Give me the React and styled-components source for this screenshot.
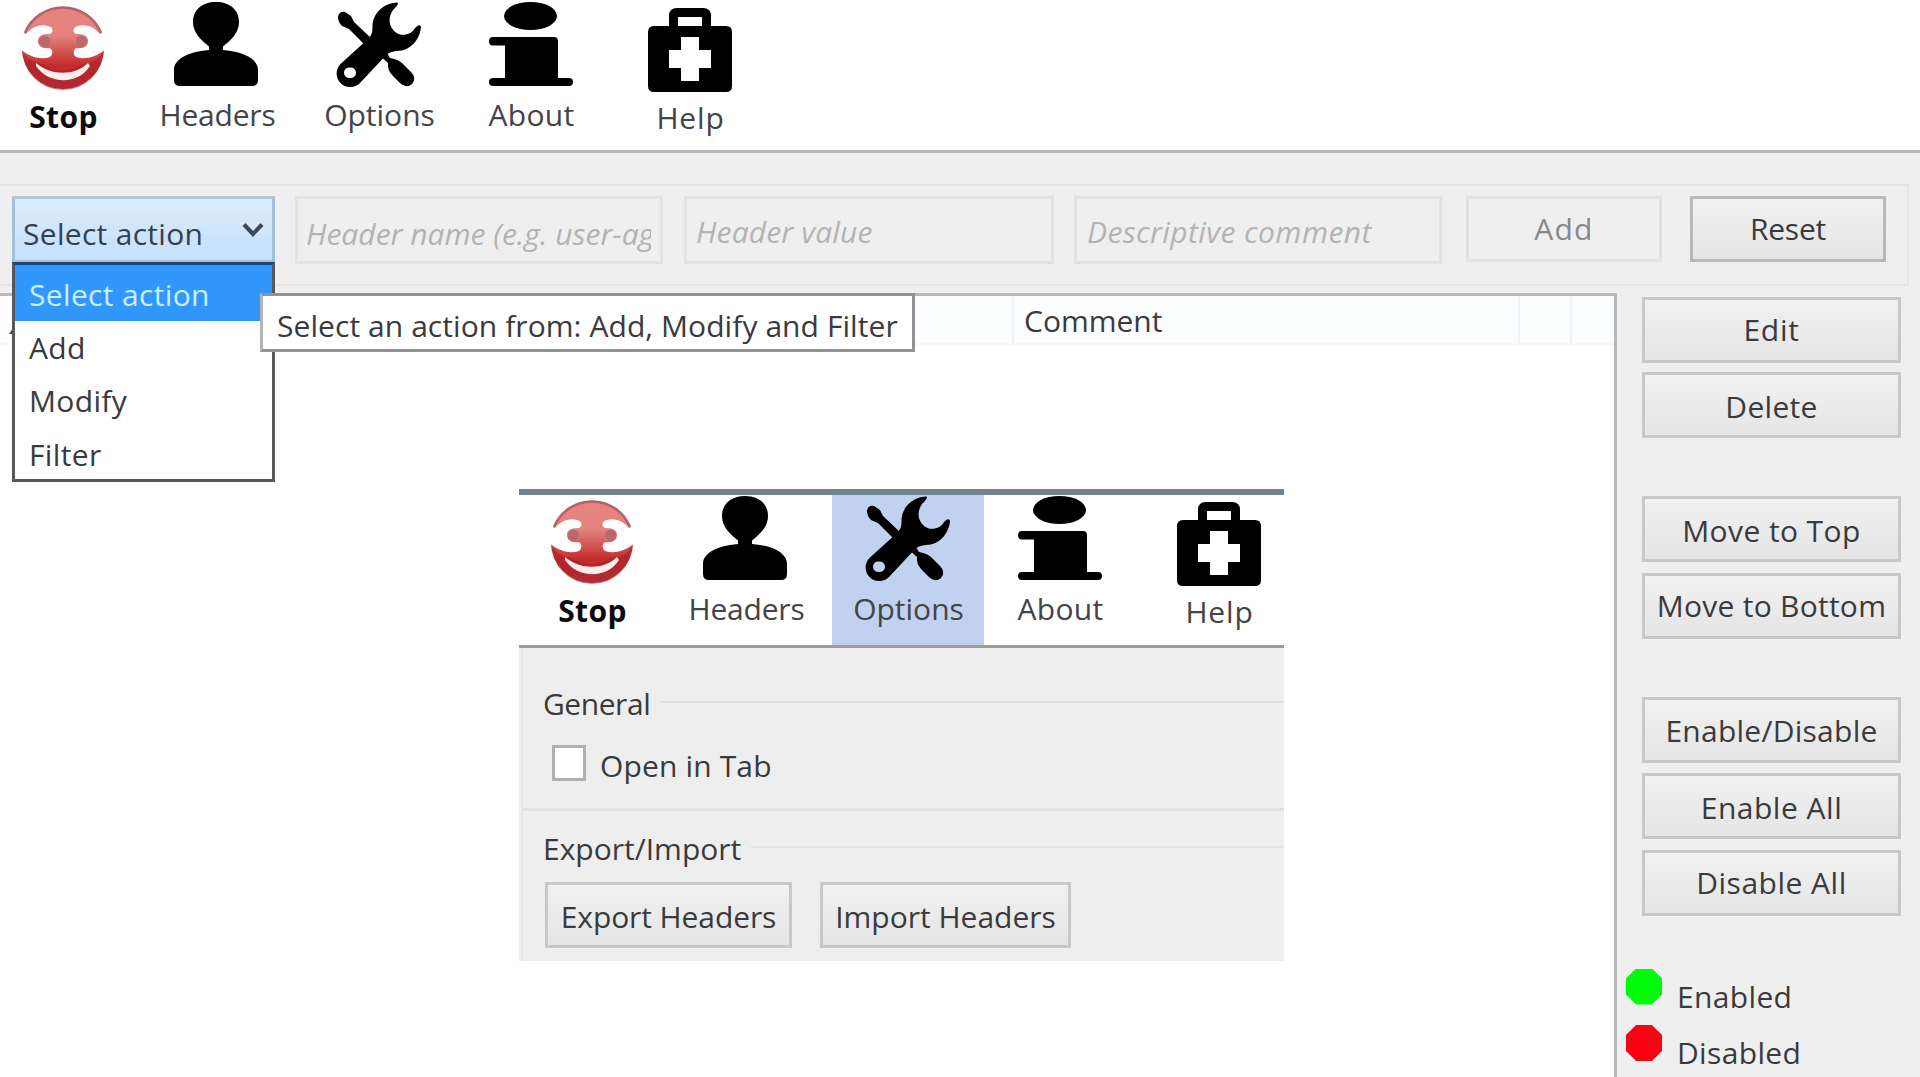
import React from 'react';
import styled, { createGlobalStyle } from 'styled-components';

const GlobalStyle = createGlobalStyle`
    * {
        box-sizing: border-box;
    }

    body {
        margin: 0;
        overflow: hidden;
        background: #efefef;
        color: #3a3a3c;
        font-family: "Open Sans", "Noto Sans", sans-serif;
        font-size: 30px;
        line-height: 40px;
        white-space: nowrap;
    }
`;

const Page = styled.div`
    display: flex;
    flex-direction: column;
    width: 1920px;
    height: 1077px;
    overflow: hidden;
`;

/* Toolbar, used by the main window and by the options panel */

const Bar = styled.div`
    display: flex;
    flex: none;
    height: ${props => props.$height}px;
    padding-left: ${props => props.$indent || 0}px;
    background: #fefefe;
    border-bottom: 3px solid ${props => props.$line};
`;

const Tool = styled.div`
    display: flex;
    flex: none;
    flex-direction: column;
    align-items: center;
    width: ${props => props.$width}px;
    margin-right: ${props => props.$after || 0}px;
    padding-top: ${props => props.$top}px;
    background: ${props => props.$active ? '#c0d2f0' : 'transparent'};

    svg {
        flex: none;
        width: 84px;
        height: 84px;
        margin-right: ${props => props.$nudge || 0}px;
        overflow: visible;
    }
`;

const ToolLabel = styled.span`
    margin-top: ${props => props.$gap}px;
    padding-left: 1px;
    color: ${props => props.$strong ? '#0a0a0c' : '#444446'};
    font-weight: ${props => props.$strong ? 700 : 400};
    letter-spacing: ${props => props.$track || 0}px;
`;

/* Filter row */

const FilterBar = styled.div`
    display: flex;
    flex: none;
    width: 1909px;
    height: 102px;
    margin-top: 31px;
    padding: 10px 0 0 12px;
    border: 2px solid #e5e5e5;
    border-left: none;
`;

const SelectWrap = styled.div`
    position: relative;
    z-index: 2;
    width: 263px;
    height: 67px;
`;

const SelectBox = styled.div`
    display: flex;
    align-items: center;
    justify-content: space-between;
    height: 67px;
    padding: 8px 8px 0 8px;
    border: 3px solid #a3bfd9;
    border-top-color: #b3c8db;
    background: linear-gradient(#dcecfc, #c3e0fb);
    color: #35404f;
    letter-spacing: 0.3px;

    svg {
        width: 22px;
        height: 16px;
        margin-top: -8px;
    }
`;

const Options = styled.div`
    position: absolute;
    top: 66px;
    left: 0;
    width: 263px;
    height: 220px;
    border: 3px solid #58585a;
    border-top-color: #1c4474;
    background: #fefefe;
`;

const Option = styled.div`
    display: flex;
    align-items: center;
    height: ${props => props.$selected ? 55.5 : 53.5}px;
    padding: ${props => props.$selected ? '4px' : '1px'} 0 0 14px;
    background: ${props => props.$selected ? '#3297fd' : 'transparent'};
    color: ${props => props.$selected ? '#c8f0ff' : 'inherit'};
    letter-spacing: 0.35px;
`;

const Tooltip = styled.div`
    position: absolute;
    top: 97px;
    left: 248px;
    display: flex;
    align-items: center;
    width: 655px;
    height: 59px;
    padding: 7px 0 0 14px;
    border: 3px solid #929294;
    border-left-color: #b4b4b6;
    background: #fefefe;
    letter-spacing: 0.07px;
`;

const Field = styled.div`
    display: flex;
    align-items: center;
    width: ${props => props.$width}px;
    height: 68px;
    margin-left: ${props => props.$before}px;
    padding: ${props => props.$drop}px 9px 0 ${props => props.$indent || 9}px;
    border: 3px solid #e2e2e2;
    color: #b3b3b3;
    font-style: italic;
    letter-spacing: ${props => props.$track || 0}px;

    span {
        overflow: hidden;
    }
`;

const Button = styled.button`
    display: flex;
    flex: none;
    align-items: center;
    justify-content: center;
    width: ${props => props.$width}px;
    height: 66px;
    margin: ${props => props.$above || 0}px 0 0 ${props => props.$before || 0}px;
    padding: ${props => props.$drop || 0}px 0 0 0;
    border: 3px solid ${props => props.disabled ? '#e1e1e1' : props.$dark ? '#b9b9b9' : '#c8c8c8'};
    background: ${props => props.disabled ? '#efefef' : 'linear-gradient(#f1f1f1, #e5e5e5)'};
    color: ${props => props.disabled ? '#88888a' : '#3a3a3e'};
    font: inherit;
    letter-spacing: ${props => props.$track || 0}px;
`;

/* Header list and side column */

const Content = styled.div`
    display: flex;
    flex: 1;
    min-height: 0;
`;

const HeaderList = styled.div`
    position: relative;
    width: 1617px;
    margin-top: 7px;
    border: solid #b7b8ba;
    border-width: 3px 3px 0 0;
    background: #fefefe;

    &::before {
        content: "";
        position: absolute;
        top: 29px;
        left: 9px;
        width: 6px;
        height: 9px;
        background: #7c3038;
        clip-path: polygon(100% 0, 100% 100%, 0 100%);
    }
`;

const Columns = styled.div`
    display: grid;
    grid-template-columns: 1012px 506px 52px 1fr;
    height: 49px;
    border-bottom: 2px solid #f5f7f8;
    background: #fcfdfe;
`;

const Column = styled.div`
    display: flex;
    align-items: center;
    padding: 2px 0 0 10px;
    border-left: 2px solid ${props => props.$first ? 'transparent' : '#f0f2f5'};
`;

const Side = styled.div`
    flex: 1;
    padding: 11px 0 0 25px;
`;

const Legend = styled.div`
    display: flex;
    gap: 15px;
    height: 56.5px;
    margin-left: -16px;
    letter-spacing: 0.35px;

    &:first-of-type {
        margin-top: 53px;
    }

    &::before {
        content: "";
        width: 36px;
        height: 36px;
        background: ${props => props.$color};
        clip-path: polygon(28% 0, 72% 0, 100% 28%, 100% 72%, 72% 100%, 28% 100%, 0 72%, 0 28%);
    }

    span {
        margin-top: 8px;
    }
`;

/* Options panel */

const Panel = styled.div`
    width: 765px;
    height: 472px;
    margin: 144px 0 0 519px;
    border-top: 6px solid #72858f;
    background: #eeeeee;
`;

const PanelBody = styled.div`
    height: 313px;
    margin-left: 2px;
    padding-top: 36px;
    border-left: 2px solid #e6e6e6;
`;

const GroupTitle = styled.div`
    display: flex;
    align-items: center;
    gap: 10px;
    height: 40px;
    padding-left: 20px;
    letter-spacing: ${props => props.$track || 0}px;

    &::after {
        content: "";
        flex: 1;
        height: 2px;
        margin-top: -5px;
        background: #e2e2e2;
    }
`;

const CheckRow = styled.label`
    display: flex;
    gap: 14px;
    height: 87px;
    margin-bottom: 18px;
    padding: 21px 0 0 29px;
    border-bottom: 3px solid #e2e2e2;

    span {
        margin-top: 1px;
        letter-spacing: 0.15px;
    }
`;

const Check = styled.i`
    width: 34px;
    height: 36px;
    border: 3px solid #b0b0b0;
    background: #ffffff;
`;

const ButtonRow = styled.div`
    display: flex;
    margin-top: 13px;
    padding-left: 22px;
`;

const StopIcon = () => (
    <svg viewBox="0 0 84 84">
        <defs>
            <linearGradient id="stopFill" x1="0" y1="0" x2="0" y2="1">
                <stop offset="0" stopColor="#e5837f" />
                <stop offset="0.35" stopColor="#e2827e" />
                <stop offset="0.6" stopColor="#cf4644" />
                <stop offset="0.72" stopColor="#c42a2c" />
                <stop offset="1" stopColor="#bd3a41" />
            </linearGradient>
        </defs>
        <circle cx="42" cy="42" r="41" fill="url(#stopFill)" />
        <path d="M4 27 A41 41 0 0 1 80 27" fill="none" stroke="#b4626c" strokeWidth="2.5" />
        <path d="M1 43 C5 53 13 57 22 58 C35 66 49 66 62 58 C71 57 79 53 83 43 A41 41 0 0 1 1 43Z" fill="#a81f2a" opacity="0.55" />
        <path d="M-2 28 L5 28 C12 19 24 17 31 22 Q33 28 27 28 C20 28 17 31 17 35 C17 40 21 43 29 42 Q34 46 29 51 C18 55 6 49 -2 42Z" fill="#fefefe" />
        <path d="M86 28 L79 28 C72 19 60 17 53 22 Q51 28 57 28 C64 28 67 31 67 35 C67 40 63 43 55 42 Q50 46 55 51 C66 55 78 49 86 42Z" fill="#fefefe" />
        <circle cx="23.5" cy="35" r="5.5" fill="#b9686c" />
        <circle cx="60.5" cy="35" r="5.5" fill="#b9686c" />
        <path d="M15 57 C30 70 54 70 67 57 L69 60 C57 79 28 79 15 60Z" fill="#fbeeea" />
    </svg>
);

const HeadersIcon = () => (
    <svg viewBox="0 0 84 84">
        <path d="M42 0C56 0 65 8 65 20C65 31 57 38 49 44.500V48C72 50 84 58 84 68V78Q84 84 78 84H6Q0 84 0 78V68C0 58 12 50 35 48V44.500C27 38 19 31 19 20C19 8 28 0 42 0Z" />
    </svg>
);

const OptionsIcon = () => (
    <svg viewBox="0 0 84 84">
        <path
            fillRule="evenodd"
            d="M61.500 .500C48 1 36 11 36.500 26C36.500 31 35 34 32 37L4.500 62A13.500 13.500 0 1 0 24 81L46 57.500C51 51 55 49.500 61 49C75 49 84 37 85 25C84 22 82 23 79 26C76 32 67 35 60.500 31C52 25 52 15 57 8C60 5 63 2 61.500 .500ZM14 65.500A5.300 5.300 0 1 1 14 76A5.300 5.300 0 1 1 14 65.500Z"
        />
        <path d="M2 15Q3 9 9 10L15 14L18 20L36 37L29 43L13 27L6 24Q2 20 2 15Z" />
        <path d="M43 53L49 48L54 56Q63 57 69 64L75 70Q81 76 76 82Q70 87 64 81L57 74Q51 68 52 61Z" />
    </svg>
);

const AboutIcon = () => (
    <svg viewBox="0 0 84 84">
        <ellipse cx="41.500" cy="14" rx="26.500" ry="14" />
        <path d="M4 35H65Q69 35 69 39V76H80Q84 76 84 80Q84 84 80 84H4Q0 84 0 80Q0 76 4 76H16V43.500H4Q0 43.500 0 39.250Q0 35 4 35Z" />
    </svg>
);

const HelpIcon = () => (
    <svg viewBox="0 0 84 84">
        <path
            fillRule="evenodd"
            d="M21 18V8Q21 0 29 0H55Q63 0 63 8V18H78Q84 18 84 24V78Q84 84 78 84H6Q0 84 0 78V24Q0 18 6 18ZM30 9V18H54V9ZM33 29V42H21V60H33V73H51V60H63V42H51V29Z"
        />
    </svg>
);

const Chevron = () => (
    <svg viewBox="0 0 22 16">
        <path d="M2 2.500L11 12L20 2.500" fill="none" stroke="#3c4857" strokeWidth="4" />
    </svg>
);

const tools = [
    { name: 'Stop', icon: StopIcon, width: 126, after: 5, top: 6, gap: 7, strong: true, track: 0.4 },
    { name: 'Headers', icon: HeadersIcon, width: 172, top: 2, gap: 9, nudge: 2, track: -0.2 },
    { name: 'Options', icon: OptionsIcon, width: 152, top: 2, gap: 9, nudge: 3 },
    { name: 'About', icon: AboutIcon, width: 152, top: 2, gap: 9, track: 0.3 },
    { name: 'Help', icon: HelpIcon, width: 166, top: 8, gap: 6, track: 0.8 },
];

const Toolbar = ({ active, shift = 0, ...bar }) => (
    <Bar {...bar}>
        {tools.map(({ name, icon: Icon, width, after, top, gap, nudge, strong, track }) => (
            <Tool
                key={name}
                $width={width}
                $after={after}
                $top={top - shift}
                $nudge={nudge}
                $active={name === active}
            >
                <Icon />
                <ToolLabel $gap={gap} $strong={strong} $track={track}>{name}</ToolLabel>
            </Tool>
        ))}
    </Bar>
);

const sideButtons = [
    { name: 'Edit', track: 0.7 },
    { name: 'Delete', above: 9, drop: 4, track: 0.3 },
    { name: 'Move to Top', above: 58, drop: 3, track: 0.4 },
    { name: 'Move to Bottom', above: 11, track: 0.25 },
    { name: 'Enable/Disable', above: 58, drop: 1, track: 0.25 },
    { name: 'Enable All', above: 9.5, drop: 4, track: 0.5 },
    { name: 'Disable All', above: 11, drop: 1, track: 0.5 },
];

const OptionsPanel = () => (
    <Panel>
        <Toolbar $height={153} $indent={10} $line="#9b9c9e" active="Options" shift={1} />
        <PanelBody>
            <GroupTitle $track={-0.45}>General</GroupTitle>
            <CheckRow>
                <Check />
                <span>Open in Tab</span>
            </CheckRow>
            <GroupTitle>Export/Import</GroupTitle>
            <ButtonRow>
                <Button $width={247} $drop={3} $track={-0.1}>Export Headers</Button>
                <Button $width={251} $drop={3} $before={28}>Import Headers</Button>
            </ButtonRow>
        </PanelBody>
    </Panel>
);

export default function App() {
    return (
        <Page>
            <GlobalStyle />
            <Toolbar $height={153} $line="#b7b7b7" />
            <FilterBar>
                <SelectWrap>
                    <SelectBox>
                        Select action
                        <Chevron />
                    </SelectBox>
                    <Options>
                        <Option $selected>Select action</Option>
                        <Option>Add</Option>
                        <Option>Modify</Option>
                        <Option>Filter</Option>
                    </Options>
                    <Tooltip>Select an action from: Add, Modify and Filter</Tooltip>
                </SelectWrap>
                <Field $width={368} $before={20} $drop={7} $indent={8}><span>Header name (e.g. user-agent)</span></Field>
                <Field $width={370} $before={21} $drop={3} $track={0.15}><span>Header value</span></Field>
                <Field $width={368} $before={20} $drop={3} $track={0.4} $indent={10}><span>Descriptive comment</span></Field>
                <Button disabled $width={196} $before={24} $track={1.2}>Add</Button>
                <Button $dark $width={196} $before={28} $track={-0.2}>Reset</Button>
            </FilterBar>
            <Content>
                <HeaderList>
                    <Columns>
                        <Column $first />
                        <Column>Comment</Column>
                        <Column />
                        <Column />
                    </Columns>
                    <OptionsPanel />
                </HeaderList>
                <Side>
                    {sideButtons.map(({ name, above, drop, track }) => (
                        <Button key={name} $width={259} $above={above} $drop={drop} $track={track}>{name}</Button>
                    ))}
                    <Legend $color="#00fb0a"><span>Enabled</span></Legend>
                    <Legend $color="#fb0010"><span>Disabled</span></Legend>
                </Side>
            </Content>
        </Page>
    );
}
